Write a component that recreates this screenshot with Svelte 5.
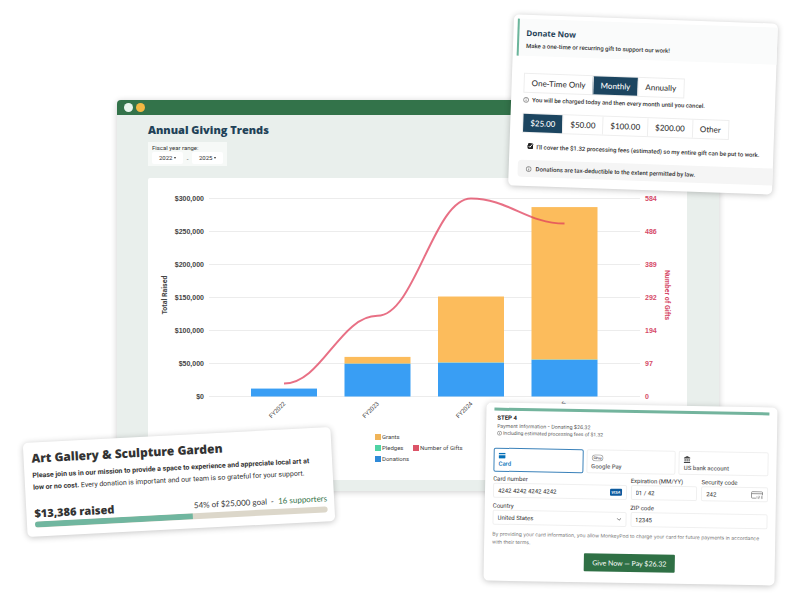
<script>
  // Chart data
  const years = [
    { label: 'FY2022', donations: 12000, pledges: 0, grants: 0, gifts: 38 },
    { label: 'FY2023', donations: 49500, pledges: 300, grants: 10200, gifts: 238 },
    { label: 'FY2024', donations: 51000, pledges: 500, grants: 100000, gifts: 584 },
    { label: 'FY2025', donations: 55500, pledges: 500, grants: 231000, gifts: 510 }
  ];

  const moneyTicks = ['$300,000', '$250,000', '$200,000', '$150,000', '$100,000', '$50,000', '$0'];
  const giftTicks = [584, 486, 389, 292, 194, 97, 0];

  const legend = [
    { label: 'Grants', color: '#f0b458', x: 227, y: 259 },
    { label: 'Pledges', color: '#4fd3a4', x: 227, y: 270 },
    { label: 'Donations', color: '#2f8ad8', x: 227, y: 281 },
    { label: 'Number of Gifts', color: '#dc5468', x: 265, y: 270 }
  ];

  // Plot geometry, in viewBox units
  const top = 20.5;
  const bottom = 218.5;
  const barWidth = 66;
  const maxMoney = 300000;
  const maxGifts = 584;

  const centerX = (i) => 136 + i * 93.5;
  const size = (value, max) => ((bottom - top) * value) / max;

  // Stack the three money series from the bottom up
  const bars = years.map((year, i) => {
    const d = size(year.donations, maxMoney);
    const p = size(year.pledges, maxMoney);
    const g = size(year.grants, maxMoney);
    const x = centerX(i) - barWidth / 2;
    return [
      { x, y: bottom - d - p - g, h: g, color: '#fcbc5c' },
      { x, y: bottom - d - p, h: p, color: '#63c7a5' },
      { x, y: bottom - d, h: d, color: '#399ef4' }
    ];
  }).flat();

  const points = years.map((year, i) => ({ x: centerX(i), y: bottom - size(year.gifts, maxGifts) }));

  const curve = points.reduce((path, p, i) => {
    if (i === 0) return `M${p.x} ${p.y}`;
    const prev = points[i - 1];
    const dx = (p.x - prev.x) * 0.4;
    return `${path} C${prev.x + dx} ${prev.y} ${p.x - dx} ${p.y} ${p.x} ${p.y}`;
  }, '');

  // Form state
  const frequencies = ['One-Time Only', 'Monthly', 'Annually'];
  const amounts = ['$25.00', '$50.00', '$100.00', '$200.00', 'Other'];
  let frequency = 'Monthly';
  let amount = '$25.00';
  let coverFees = true;
  let method = 'card';
  let cardNumber = '4242 4242 4242 4242';
  let expiration = '01 / 42';
  let securityCode = '242';
  let country = 'United States';
  let zip = '12345';

  const goal = 25000;
  const raised = 13386;
  const percent = Math.round((raised / goal) * 100);
</script>

<div class="stage">
  <main class="window">
    <div class="titlebar">
      <span class="dot"></span>
      <span class="dot yellow"></span>
    </div>

    <div class="report">
      <h1>Annual Giving Trends</h1>

      <fieldset class="range">
        <legend>Fiscal year range:</legend>
        <div class="range-row">
          <button type="button">2022 <i class="caret"></i></button>
          <span>-</span>
          <button type="button">2025 <i class="caret"></i></button>
        </div>
      </fieldset>

      <div class="panel">
        <svg class="chart" viewBox="0 0 539 302" role="img" aria-label="Annual Giving Trends">
          {#each moneyTicks as tick, i}
            <line x1="61" x2="492" y1={top + i * 33} y2={top + i * 33} stroke="#ececec" stroke-width="1" />
            <text class="tick" x="56" y={top + 2 + i * 33} text-anchor="end">{tick}</text>
            <text class="tick pink" x="497" y={top + 2 + i * 33}>{giftTicks[i]}</text>
          {/each}

          {#each bars as bar}
            <rect x={bar.x} y={bar.y} width={barWidth} height={bar.h} fill={bar.color} />
          {/each}

          <path d={curve} fill="none" stroke="#e0405c" stroke-opacity="0.75" stroke-width="2" />

          {#each years as year, i}
            <text class="year" text-anchor="end" transform="translate({centerX(i) + 2} 226) rotate(-45)">{year.label}</text>
          {/each}

          <text class="axis" text-anchor="middle" transform="translate(19 117) rotate(-90)">Total Raised</text>
          <text class="axis pink" text-anchor="middle" transform="translate(517 117) rotate(90)">Number of Gifts</text>

          {#each legend as item}
            <rect x={item.x} y={item.y - 3} width="6" height="6" fill={item.color} />
            <text class="key" x={item.x + 7} y={item.y + 2}>{item.label}</text>
          {/each}
        </svg>
      </div>
    </div>
  </main>

  <section class="card donate">
    <header>
      <h2>Donate Now</h2>
      <p>Make a one-time or recurring gift to support our work!</p>
    </header>

    <div class="choices">
      {#each frequencies as item}
        <button type="button" class:active={frequency === item} on:click={() => (frequency = item)}>{item}</button>
      {/each}
    </div>
    <p class="note">
      <svg class="info" viewBox="0 0 12 12"><circle cx="6" cy="6" r="5" /><path d="M6 3v1.4M6 5.4V9" /></svg>
      You will be charged today and then every month until you cancel.
    </p>

    <div class="choices amounts">
      {#each amounts as item}
        <button type="button" class:active={amount === item} on:click={() => (amount = item)}>{item}</button>
      {/each}
    </div>

    <label class="fees">
      <input type="checkbox" bind:checked={coverFees} />
      I'll cover the $1.32 processing fees (estimated) so my entire gift can be put to work.
    </label>

    <p class="law">
      <svg class="info" viewBox="0 0 12 12"><circle cx="6" cy="6" r="5" /><path d="M6 3v1.4M6 5.4V9" /></svg>
      Donations are tax-deductible to the extent permitted by law.
    </p>
  </section>

  <section class="card payment">
    <div class="progress-line"></div>
    <h3>STEP 4</h3>
    <p class="summary">Payment Information - Donating $26.32</p>
    <p class="including">
      <svg class="info" viewBox="0 0 12 12"><circle cx="6" cy="6" r="5" /><path d="M6 3v1.4M6 5.4V9" /></svg>
      Including estimated processing fees of $1.32
    </p>

    <div class="methods">
      <button type="button" class:chosen={method === 'card'} on:click={() => (method = 'card')}>
        <svg viewBox="0 0 14 12" width="7" height="6"><path fill="#0570b8" d="M1.5 0h11A1.5 1.5 0 0 1 14 1.500V3H0V1.500A1.500 1.500 0 0 1 1.500 0zM0 5h14v5a1.500 1.500 0 0 1-1.500 1.500h-11A1.500 1.500 0 0 1 0 10z" /></svg>
        Card
      </button>
      <button type="button" class:chosen={method === 'gpay'} on:click={() => (method = 'gpay')}>
        <svg viewBox="0 0 24 14" width="12" height="7"><rect x="1" y="1" width="22" height="12" rx="6" fill="#fff" stroke="#777" stroke-width="1.200" /><text x="12" y="9.500" font-size="7" font-weight="700" text-anchor="middle" fill="#666">GPay</text></svg>
        Google Pay
      </button>
      <button type="button" class:chosen={method === 'bank'} on:click={() => (method = 'bank')}>
        <svg viewBox="0 0 14 14" width="7" height="7"><path fill="#444" d="M7 0l6.500 3.500V5H.5V3.500zM2 6h2v5H2zM6 6h2v5H6zM10 6h2v5h-2zM.5 12h13v2H.5z" /></svg>
        US bank account
      </button>
    </div>

    <div class="fields">
      <div class="field">
        <label for="number">Card number</label>
        <div class="box">
          <input id="number" bind:value={cardNumber} />
          <span class="visa">VISA</span>
        </div>
      </div>
      <div class="field">
        <label for="expiration">Expiration (MM/YY)</label>
        <div class="box"><input id="expiration" bind:value={expiration} /></div>
      </div>
      <div class="field">
        <label for="code">Security code</label>
        <div class="box">
          <input id="code" bind:value={securityCode} />
          <svg viewBox="0 0 24 16" width="12" height="8" fill="none" stroke="#777" stroke-width="1.500"><path d="M10 14H3a2 2 0 0 1-2-2V3a2 2 0 0 1 2-2h18a2 2 0 0 1 2 2v5M1 5h22" /><path d="M12 10v5M15 10h2v2.500h-2V15h2M20 10h2.500v5H20M20 12.500h2" stroke-width="1" /></svg>
        </div>
      </div>
      <div class="field">
        <label for="country">Country</label>
        <div class="box">
          <select id="country" bind:value={country}>
            <option>United States</option>
            <option>Canada</option>
          </select>
          <svg viewBox="0 0 10 6" width="5" height="3" fill="none" stroke="#555" stroke-width="1.500"><path d="M1 1l4 4 4-4" /></svg>
        </div>
      </div>
      <div class="field wide">
        <label for="zip">ZIP code</label>
        <div class="box"><input id="zip" bind:value={zip} /></div>
      </div>
    </div>

    <p class="terms">
      By providing your card information, you allow MonkeyPod to charge your card for future payments in accordance
      with their terms.
    </p>
    <button type="submit" class="give">Give Now — Pay $26.32</button>
  </section>

  <section class="card campaign">
    <h2>Art Gallery &amp; Sculpture Garden</h2>
    <p>
      <b>Please join us in our mission to provide a space to experience and appreciate local art at low or no cost.</b>
      Every donation is important and our team is so grateful for your support.
    </p>
    <div class="totals">
      <strong>$13,386 raised</strong>
      <span>{percent}% of $25,000 goal &nbsp;-&nbsp; <a href="#supporters">16 supporters</a></span>
    </div>
    <div class="meter"><div class="fill" style="width: {percent}%"></div></div>
  </section>
</div>

<style>
  :global(body) {
    background: #fff;
  }

  .stage {
    position: relative;
    box-sizing: border-box;
    min-height: 100vh;
    padding: 100px 81px 100px 117px;
    overflow: hidden;
    font-family: Roboto, sans-serif;
    color: #333;
  }

  h1, h2, h3, p {
    margin: 0;
  }

  button, input, select {
    box-sizing: border-box;
    margin: 0;
    padding: 0;
    border: none;
    background: none;
    font: inherit;
    color: inherit;
  }

  button {
    cursor: pointer;
  }

  /* Report window */
  .window {
    background: #e9efec;
    border-radius: 4px 4px 0 0;
    box-shadow: 0 1px 6px rgba(0, 0, 0, 0.2);
  }

  .titlebar {
    display: flex;
    align-items: center;
    gap: 3px;
    height: 15px;
    padding-left: 7px;
    background: #33734a;
    border-radius: 4px 4px 0 0;
  }

  .dot {
    width: 9px;
    height: 9px;
    border-radius: 50%;
    background: #e9f5ee;
  }

  .dot.yellow {
    background: #f3b843;
  }

  .report {
    padding: 8px 32px 11px 31px;
  }

  h1 {
    font: 800 11px/14px "Open Sans", sans-serif;
    color: #1f4258;
  }

  .range {
    width: 79px;
    box-sizing: border-box;
    margin: 5px 0 12px;
    padding: 2px 4px;
    border: none;
    background: #f6f9f7;
    font-size: 6px;
  }

  .range legend {
    float: left;
    padding: 0;
    line-height: 8px;
  }

  .range-row {
    clear: both;
    display: flex;
    align-items: center;
    justify-content: space-between;
  }

  .range button {
    width: 31px;
    height: 12px;
    background: #fff;
    line-height: 12px;
    border-radius: 2px;
  }

  .caret {
    display: inline-block;
    border: 1px solid transparent;
    border-top: 2px solid #333;
    border-bottom: none;
    vertical-align: middle;
  }

  .panel {
    background: #fff;
    border-radius: 2px;
  }

  .chart {
    display: block;
    width: 100%;
    height: auto;
    fill: #444;
  }

  .tick {
    font: 700 7px "Liberation Sans", Arial, sans-serif;
  }

  .axis {
    font-size: 7px;
    font-weight: 700;
  }

  .year, .key {
    font-size: 6px;
  }

  .pink {
    fill: #d64a68;
  }

  /* Floating cards */
  .card {
    position: absolute;
    box-sizing: border-box;
    background: #fff;
    border-radius: 5px;
    box-shadow: 0 1px 6px rgba(0, 0, 0, 0.24);
  }

  .info {
    flex: none;
    width: 6px;
    height: 6px;
    fill: none;
    stroke: #333;
    stroke-width: 1;
  }

  .donate {
    top: 19px;
    right: 25px;
    width: 33%;
    min-width: 264px;
    padding: 4px 0 9px 4px;
    transform: rotate(2deg);
  }

  .donate header {
    height: 37px;
    box-sizing: border-box;
    padding: 7px 0 0 7px;
    border-left: 2px solid #6bb59b;
    background: #fafbfb;
  }

  .donate h2 {
    font: 700 8px/14px "Open Sans", sans-serif;
    color: #1f4258;
  }

  .donate header p {
    font-size: 6px;
    font-weight: 500;
    line-height: 12px;
  }

  .choices {
    display: flex;
    width: max-content;
    margin: 17px 0 0 8px;
    border: 1px solid #eee;
    font: 500 8px/18px Lato, sans-serif;
  }

  .choices button {
    padding: 0 7px;
    border-left: 1px solid #eee;
  }

  .choices button:first-child {
    border-left: none;
  }

  .choices .active {
    background: #1c4560;
    color: #fff;
  }

  .note, .law, .fees, .including {
    display: flex;
    align-items: center;
    gap: 3px;
    font-size: 6px;
  }

  .note, .law, .fees {
    font-weight: 500;
  }

  .note {
    height: 13px;
    padding-left: 8px;
  }

  .choices.amounts {
    margin-top: 7px;
  }

  .fees {
    height: 12px;
    margin-top: 7px;
    padding-left: 14px;
    white-space: nowrap;
  }

  .fees input {
    width: 6px;
    height: 6px;
    accent-color: #222;
  }

  .law {
    height: 17px;
    margin: 8px 0 0 5px;
    padding-left: 8px;
    gap: 4px;
    background: #f5f5f5;
    border-radius: 4px 0 0 4px;
  }

  .payment {
    top: 405px;
    right: 24px;
    width: 36%;
    min-width: 291px;
    padding: 5px 8px 11px;
    font-size: 6px;
    transform: rotate(1deg);
  }

  .progress-line {
    height: 3px;
    background: #73b49d;
  }

  .payment h3, .summary, .including {
    padding-left: 3px;
  }

  .payment h3 {
    margin-top: 3px;
    font-size: 6px;
    line-height: 8px;
    color: #222;
  }

  .summary {
    font: 5px/8px Inter, sans-serif;
    color: #555;
  }

  .including {
    gap: 1px;
    font-size: 5px;
    line-height: 6px;
    color: #555;
  }

  .including .info {
    width: 5px;
    height: 5px;
  }

  .methods {
    display: grid;
    grid-template-columns: repeat(3, 1fr);
    gap: 3px;
    margin-top: 12px;
    font: 500 6px/7px Roboto, sans-serif;
    color: #666;
  }

  .methods button {
    display: flex;
    flex-direction: column;
    align-items: flex-start;
    justify-content: center;
    gap: 1px;
    height: 24px;
    padding-left: 4px;
    border: 1px solid #f0f0f0;
    border-radius: 2px;
    text-align: left;
  }

  .methods .chosen {
    border-color: #3b82ba;
    color: #0570b8;
  }

  .fields {
    display: grid;
    grid-template-columns: 2fr 1fr 1fr;
    gap: 3px 4px;
    margin-top: 2px;
  }

  .wide {
    grid-column: span 2;
  }

  .field label {
    display: block;
    line-height: 9px;
  }

  .box {
    display: flex;
    align-items: center;
    height: 15px;
    box-sizing: border-box;
    padding: 0 4px;
    border: 1px solid #f0f0f0;
    border-radius: 2px;
  }

  .box input, .box select {
    flex: 1;
    width: 100%;
    min-width: 0;
    height: 13px;
    appearance: none;
    outline: none;
  }

  .visa {
    padding: 0 1px;
    border-radius: 1px;
    background: #0d5b9e;
    color: #fff;
    font: italic 700 4px/7px "Liberation Sans", Arial, sans-serif;
  }

  .terms {
    margin-top: 5px;
    font: 5px/8px Inter, sans-serif;
    color: #777;
  }

  .give {
    display: block;
    height: 18px;
    margin: 6px auto 0;
    padding: 0 8px;
    border-radius: 1px;
    background: #2f7045;
    color: #fff;
    font: 7px/18px Lato, sans-serif;
  }

  .campaign {
    top: 435px;
    left: 25px;
    width: 38%;
    min-width: 308px;
    padding: 8px 7px 9px 8px;
    transform: rotate(-3deg);
  }

  .campaign h2 {
    font: 800 12px/16px "Open Sans", sans-serif;
  }

  .campaign p {
    margin-top: 3px;
    padding-right: 8px;
    font-size: 7px;
    line-height: 12px;
  }

  .totals {
    display: flex;
    align-items: center;
    justify-content: space-between;
    margin-top: 12px;
    font: 8px/16px Lato, sans-serif;
  }

  .totals strong {
    font: 800 11px/16px "Open Sans", sans-serif;
  }

  .totals a {
    color: #2f7045;
    text-decoration: none;
  }

  .meter {
    height: 6px;
    border-radius: 3px;
    overflow: hidden;
    background: #dcd7ca;
  }

  .fill {
    height: 100%;
    background: #70b69f;
  }
</style>
